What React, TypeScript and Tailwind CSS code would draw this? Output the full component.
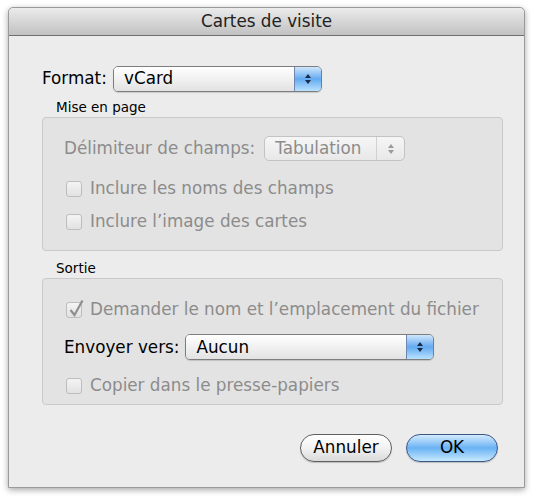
import React from 'react';

const font = { fontFamily: '"DejaVu Sans", "Lucida Grande", sans-serif' };

function Arrows({ color = '#1b2a44' }: { color?: string }) {
  return (
    <svg width="8" height="12" viewBox="0 0 8 12">
      <path d="M4 1 L7 5 L1 5 Z" fill={color} />
      <path d="M4 11 L7 7 L1 7 Z" fill={color} />
    </svg>
  );
}

function AquaPopup({ label, width }: { label: string; width: string }) {
  return (
    <div
      className={`${width} h-[26px] flex rounded-[5px] border border-[#7d7d7d] overflow-hidden shadow-[0_1px_1px_rgba(0,0,0,0.15)]`}
    >
      <div className="flex-1 flex items-center pl-[10px] bg-gradient-to-b from-[#ffffff] via-[#f1f1f1] to-[#e2e2e2] text-black">
        {label}
      </div>
      <div className="w-[27px] flex items-center justify-center border-l border-[#6f86b0] bg-gradient-to-b from-[#cfe6fb] via-[#62aaf0] to-[#b9e2ff]">
        <Arrows />
      </div>
    </div>
  );
}

function Checkbox({ checked, label }: { checked?: boolean; label: string }) {
  return (
    <div className="flex items-center gap-[8px] text-[#8c8c8c]">
      <div className="relative w-[16px] h-[16px] rounded-[3px] border border-[#bdbdbd] bg-gradient-to-b from-[#f4f4f4] to-[#e2e2e2]">
        {checked && (
          <svg className="absolute -top-[4px] left-[1px]" width="17" height="19" viewBox="0 0 17 19">
            <path d="M2.5 11 L6.5 16 L14.5 1.5" fill="none" stroke="#8f8f8f" strokeWidth="2.2" />
          </svg>
        )}
      </div>
      <span>{label}</span>
    </div>
  );
}

export default function App() {
  return (
    <div className="w-[534px] h-[498px] bg-white pt-[7px] pl-[8px] text-[16.8px]" style={font}>
      <div className="w-[517px] h-[481px] flex flex-col bg-[#ececec] border border-[#9a9a9a] rounded-t-[5px] shadow-[0_2px_6px_rgba(0,0,0,0.35)]">
        {/* Title bar */}
        <div className="h-[28px] shrink-0 flex items-center justify-center rounded-t-[5px] border-b border-[#6f6f6f] bg-gradient-to-b from-[#ebebeb] to-[#c2c2c2] text-[#222]">
          Cartes de visite
        </div>

        <div className="flex-1 flex flex-col pl-[33px]">
          {/* Format */}
          <div className="mt-[30px] flex items-center gap-[7px] text-black">
            <span className="w-[64px]">Format:</span>
            <AquaPopup label="vCard" width="w-[209px]" />
          </div>

          {/* Mise en page */}
          <div className="mt-[5px] pl-[14px] text-[13.5px] text-black leading-[20px]">Mise en page</div>
          <div className="w-[461px] h-[134px] rounded-[4px] border border-[#c9c9c9] bg-[#e3e3e3] pl-[21px] pt-[18px] flex flex-col">
            <div className="flex items-center gap-[9px] text-[#8c8c8c]">
              <span>Délimiteur de champs:</span>
              <div className="w-[141px] h-[25px] flex items-center rounded-[5px] border border-[#c3c3c3] bg-gradient-to-b from-[#f6f6f6] to-[#e8e8e8]">
                <span className="flex-1 pl-[10px]">Tabulation</span>
                <div className="w-[28px] h-full flex items-center justify-center border-l border-[#d0d0d0]">
                  <Arrows color="#9a9a9a" />
                </div>
              </div>
            </div>
            <div className="mt-[15px] pl-[2px] flex flex-col gap-[8px]">
              <Checkbox label="Inclure les noms des champs" />
              <Checkbox label="Inclure l’image des cartes" />
            </div>
          </div>

          {/* Sortie */}
          <div className="mt-[7px] pl-[14px] text-[13.5px] text-black leading-[20px]">Sortie</div>
          <div className="w-[461px] h-[127px] rounded-[4px] border border-[#c9c9c9] bg-[#e3e3e3] pl-[21px] pt-[18px] flex flex-col">
            <div className="pl-[2px]">
              <Checkbox checked label="Demander le nom et l’emplacement du fichier" />
            </div>
            <div className="mt-[12px] flex items-center gap-[6px] text-black">
              <span>Envoyer vers:</span>
              <AquaPopup label="Aucun" width="w-[249px]" />
            </div>
            <div className="mt-[13px] pl-[2px]">
              <Checkbox label="Copier dans le presse-papiers" />
            </div>
          </div>

          {/* Buttons */}
          <div className="mt-[29px] w-[456px] flex justify-end gap-[14px]">
            <div className="w-[92px] h-[28px] flex items-center justify-center rounded-full border-[1.5px] border-[#5f5f5f] bg-gradient-to-b from-[#ffffff] via-[#f2f2f2] to-[#dadada] text-black shadow-[0_1px_1px_rgba(0,0,0,0.2)]">
              Annuler
            </div>
            <div className="w-[92px] h-[28px] flex items-center justify-center rounded-full border-[1.5px] border-[#3c5684] bg-gradient-to-b from-[#d3ebfd] via-[#69b2f3] to-[#c6e9ff] text-black shadow-[0_1px_1px_rgba(0,0,0,0.2)]">
              OK
            </div>
          </div>
        </div>
      </div>
    </div>
  );
}
